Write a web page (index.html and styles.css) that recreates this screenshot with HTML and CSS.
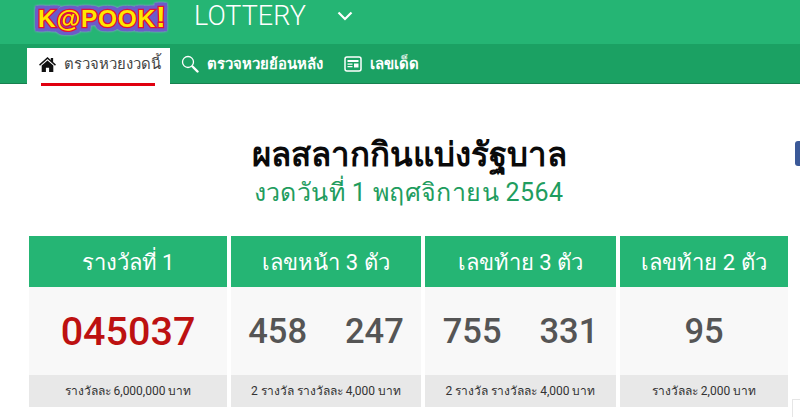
FILE: index.html
```html
<!DOCTYPE html>
<html lang="th">
<head>
<meta charset="utf-8">
<title>ผลสลากกินแบ่งรัฐบาล</title>
<link rel="stylesheet" href="styles.css">
</head>
<body>
<header class="topbar">
  <a class="logo"><span class="logo-text">K@POOK<span class="logo-bang">!</span></span></a>
  <span class="section-name">LOTTERY</span>
  <svg class="chevron" viewBox="0 0 16 10" width="16" height="10"><path d="M1.5 1.5 8 8l6.5-6.5" fill="none" stroke="#fff" stroke-width="2.2"/></svg>
</header>
<nav class="navbar">
  <a class="tab active">
    <svg class="ico" viewBox="0 0 18 16" width="17" height="15"><path d="M9 0 0 8l1 1.2L9 2.2l8 7L18 8l-3-2.700V1h-2.500v2.100z" fill="#111"/><path d="M9 3.600 2.800 9v7H7.300v-4.500h3.400V16h4.500V9z" fill="#111"/></svg>
    <span>ตรวจหวยงวดนี้</span>
  </a>
  <a class="tab">
    <svg class="ico" viewBox="0 0 18 18" width="18" height="18"><circle cx="7" cy="7" r="5.500" fill="none" stroke="#fff" stroke-width="1.300"/><path d="m11.500 11.500 5 5" stroke="#fff" stroke-width="2.400" stroke-linecap="round"/></svg>
    <span>ตรวจหวยย้อนหลัง</span>
  </a>
  <a class="tab">
    <svg class="ico" viewBox="0 0 18 16" width="18" height="16"><rect x="1" y="1" width="16" height="14" rx="2" fill="none" stroke="#fff" stroke-width="1.500"/><path d="M3.500 4h11v2h-11zM3.500 7.500h5v1.200h-5zM3.500 10h5v1.200h-5zM10 7.500h4.500v4h-4.500z" fill="#fff"/></svg>
    <span>เลขเด็ด</span>
  </a>
</nav>
<main class="content">
  <div class="fb-edge"></div>
  <h1 class="title">ผลสลากกินแบ่งรัฐบาล</h1>
  <h2 class="date">งวดวันที่ 1 พฤศจิกายน 2564</h2>
  <section class="prizes">
    <article class="prize">
      <h3 class="prize-head">รางวัลที่ 1</h3>
      <div class="prize-body first"><span>045037</span></div>
      <p class="prize-foot">รางวัลละ 6,000,000 บาท</p>
    </article>
    <article class="prize">
      <h3 class="prize-head">เลขหน้า 3 ตัว</h3>
      <div class="prize-body"><span>458</span><span>247</span></div>
      <p class="prize-foot">2 รางวัล รางวัลละ 4,000 บาท</p>
    </article>
    <article class="prize">
      <h3 class="prize-head">เลขท้าย 3 ตัว</h3>
      <div class="prize-body"><span>755</span><span>331</span></div>
      <p class="prize-foot">2 รางวัล รางวัลละ 4,000 บาท</p>
    </article>
    <article class="prize">
      <h3 class="prize-head">เลขท้าย 2 ตัว</h3>
      <div class="prize-body"><span>95</span></div>
      <p class="prize-foot">รางวัลละ 2,000 บาท</p>
    </article>
  </section>
  <div class="corner-box"></div>
</main>
</body>
</html>
```
FILE: styles.css
```css
* { box-sizing: border-box; }
html, body { margin: 0; height: 417px; overflow: hidden; background: #fff; }
body { font-family: Roboto, "Noto Sans", "Liberation Sans", sans-serif; color: #111; }
.topbar { height: 44px; background: #25b574; display: flex; align-items: flex-start; padding-left: 38px; }
.logo { width: 130px; height: 34px; padding-top: 5px; display: block; }
.logo-text { display: block; font: 900 24.500px/24px "Liberation Sans", sans-serif; letter-spacing: 0.700px; color: #ffe800; -webkit-text-stroke: 2.600px #e0103a; paint-order: stroke fill; white-space: nowrap; filter: drop-shadow(3px 0 0 #6c5cc8) drop-shadow(-3px 0 0 #6c5cc8) drop-shadow(0 3px 0 #6c5cc8) drop-shadow(0 -3px 0 #6c5cc8) drop-shadow(0 0 1px #a79be6); }
.logo-bang { font-size: 29px; }
.section-name { margin-left: 26px; font-size: 27px; line-height: 32px; font-weight: 300; color: #fff; }
.chevron { margin-left: 31px; margin-top: 11px; }
.navbar { height: 40px; background: #1ba163; border-bottom: 1px solid #17804f; display: flex; align-items: flex-end; padding-left: 27px; }
.tab { height: 35px; display: flex; align-items: center; gap: 8px; padding: 0 10px 4px 11px; color: #fff; font-size: 14.900px; font-weight: 700; white-space: nowrap; }
.tab.active { position: relative; width: 143px; background: #fff; color: #444; height: 36px; margin-bottom: -1px; padding: 0 0 4px 12px; font-weight: 500; }
.tab.active::after { content: ""; position: absolute; left: 14px; width: 114px; bottom: -2px; height: 3px; background: #e0000f; }
.ico { flex: none; }
.content { position: relative; padding: 50px 12px 0 29px; }
.title { margin: 0; text-align: center; font-size: 33px; line-height: 42px; font-weight: 700; color: #0a0a0a; padding-left: 2px; }
.date { margin: 0; text-align: center; font-size: 25px; line-height: 34px; font-weight: 400; color: #1f9d5f; letter-spacing: 0.4px; }
.prizes { margin-top: 26px; display: grid; grid-template-columns: 198px 190px 191px 168px; gap: 4px; }
.prize { display: flex; flex-direction: column; background: #f8f8f8; }
.prize-head { margin: 0; height: 51px; background: #25b574; color: #fff; font-size: 22px; font-weight: 400; line-height: 53px; text-align: center; white-space: nowrap; }
.prize-body { height: 88px; display: flex; justify-content: center; align-items: center; gap: 38px; font-size: 34.500px; font-weight: 500; color: #555; }
.prize-body.first { font-size: 39.500px; font-weight: 500; color: #bd1111; }
.prize-foot { margin: 0; height: 32px; background: #e8e8e8; font-size: 12px; line-height: 32px; text-align: center; color: #333; white-space: nowrap; }
.fb-edge { position: absolute; right: 0; top: 57px; width: 5px; height: 25px; background: #3b5998; border-radius: 3px 0 0 3px; }
.corner-box { position: absolute; right: 0; top: 315px; width: 8px; height: 30px; border: 1px solid #e6e6e6; border-right: 0; }
```
